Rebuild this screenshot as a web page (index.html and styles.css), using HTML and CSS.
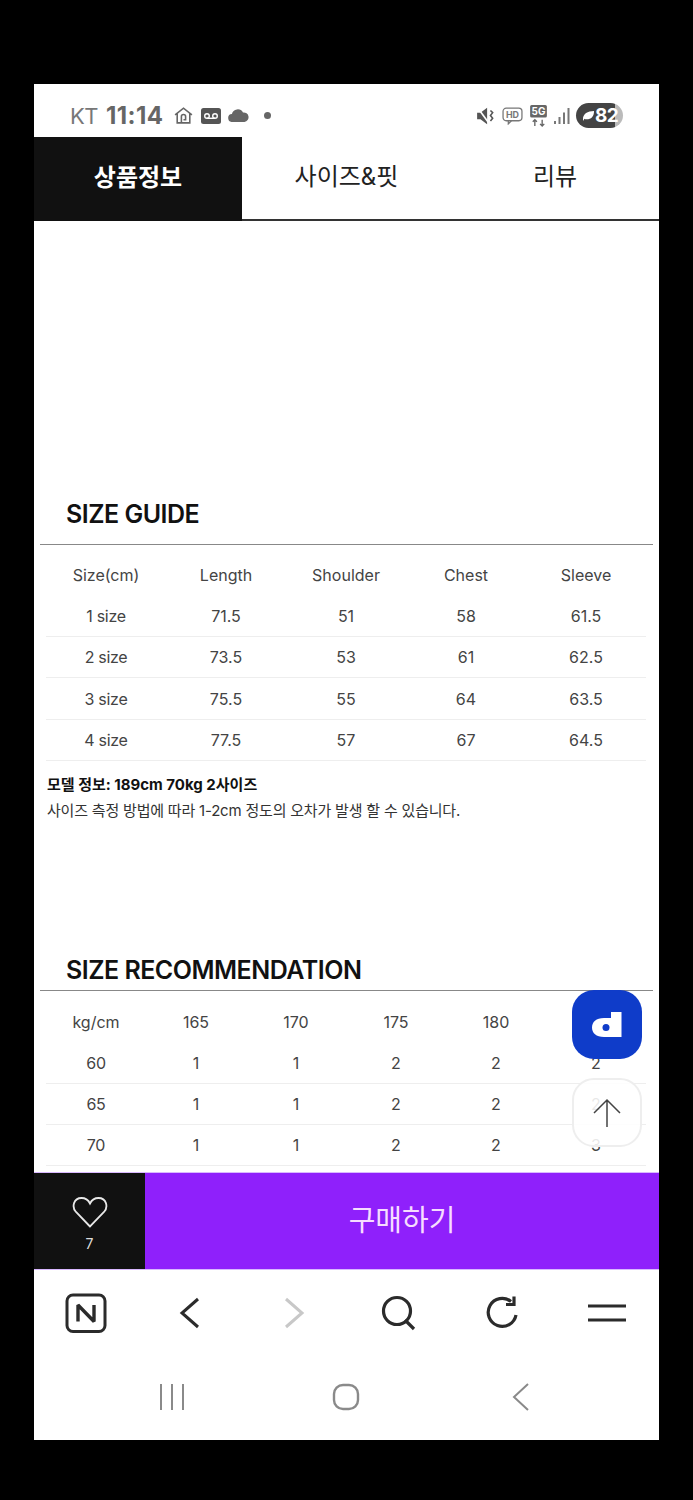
FILE: index.html
```html
<!DOCTYPE html>
<html lang="ko">
<head>
  <meta charset="UTF-8" />
  <meta name="viewport" content="width=device-width, initial-scale=1.0"/>
  <title>SIZE GUIDE</title>
  <link rel="stylesheet" href="styles.css">
</head>
<body>
  <div class="phone">
    <div class="status-bar">
      <div class="status-left">
        <span class="carrier">KT</span>
        <span class="clock">11:14</span>
        <svg class="st-home" width="21" height="21" viewBox="0 0 20 20" fill="none" stroke="#666" stroke-width="1.5"><path d="M2 9.500 10 3l8 6.500M4 8v9h12V8"/><path d="M8 17v-6a2 2 0 0 1 4 0v3h-2"/></svg>
        <svg class="st-tape" width="20" height="16" viewBox="0 0 20 16"><rect width="20" height="16" rx="2.500" fill="#555"/><circle cx="6" cy="8" r="2.300" fill="none" stroke="#fff" stroke-width="1.400"/><circle cx="14" cy="8" r="2.300" fill="none" stroke="#fff" stroke-width="1.400"/><path d="M6 10.300h8" stroke="#fff" stroke-width="1.400"/></svg>
        <svg class="st-cloud" width="21" height="13" viewBox="0 0 21 13"><path d="M4.500 13a4 4 0 0 1-.6-8A6 6 0 0 1 15 3.500 4.800 4.800 0 0 1 16.500 13z" fill="#666"/></svg>
        <span class="st-dot"></span>
      </div>
      <div class="status-right">
        <svg width="20" height="20" viewBox="0 0 18 18" fill="#555"><path d="M1 6h3l6-4.500v15L4 12H1z"/><path d="M1 1l11 15" stroke="#fff" stroke-width="1.500"/><path d="M13 4l2 2-2 2.500 2 2.500-2 2.500" fill="none" stroke="#555" stroke-width="1.400"/></svg>
        <svg width="21" height="19" viewBox="0 0 20 18" fill="none" stroke="#777" stroke-width="1.200"><rect x="1" y="2" width="18" height="12" rx="3"/><path d="M6 14v3l3-3"/><text x="10" y="11.500" font-family="Inter" font-size="8.500" font-weight="700" fill="#777" stroke="none" text-anchor="middle">HD</text></svg>
        <svg width="19" height="22" viewBox="0 0 18 21"><rect x="1" y="0" width="16" height="12" rx="1.500" fill="#666"/><text x="9" y="10" font-family="Inter" font-size="9.500" font-weight="700" fill="#fff" text-anchor="middle">5G</text><path d="M5.500 20v-6M3.500 16l2-2 2 2M12.500 14v6M10.500 18l2 2 2-2" fill="none" stroke="#666" stroke-width="1.300"/></svg>
        <svg class="st-signal" width="16" height="17" viewBox="0 0 16 17" fill="#777"><rect x="0" y="14" width="2" height="3"/><rect x="4.500" y="10" width="2" height="7"/><rect x="9" y="5.500" width="2" height="11.500"/><rect x="13.500" y="1" width="2" height="16"/></svg>
        <div class="battery">
          <svg width="13" height="12" viewBox="0 0 14 13"><path d="M1 10C1 4 6 1 13 1c0 6-3 9-8 9-1 0-2 0-2.500-.5L1.500 12z" fill="#fff"/></svg>
          <span>82</span>
        </div>
      </div>
    </div>

    <div class="tabs">
      <a class="tab active">상품정보</a>
      <a class="tab">사이즈&amp;핏</a>
      <a class="tab">리뷰</a>
    </div>

    <div class="content">
      <section class="size-guide">
        <h2 class="section-title">SIZE GUIDE</h2>
        <table class="size-table">
          <thead>
            <tr><th>Size(cm)</th><th>Length</th><th>Shoulder</th><th>Chest</th><th>Sleeve</th></tr>
          </thead>
          <tbody>
            <tr><td>1 size</td><td>71.5</td><td>51</td><td>58</td><td>61.5</td></tr>
            <tr><td>2 size</td><td>73.5</td><td>53</td><td>61</td><td>62.5</td></tr>
            <tr><td>3 size</td><td>75.5</td><td>55</td><td>64</td><td>63.5</td></tr>
            <tr><td>4 size</td><td>77.5</td><td>57</td><td>67</td><td>64.5</td></tr>
          </tbody>
        </table>
        <div class="notes">
          <p class="model-info">모델 정보: 189cm 70kg 2사이즈</p>
          <p>사이즈 측정 방법에 따라 1-2cm 정도의 오차가 발생 할 수 있습니다.</p>
        </div>
      </section>

      <section class="size-reco">
        <h2 class="section-title">SIZE RECOMMENDATION</h2>
        <table class="size-table">
          <thead>
            <tr><th>kg/cm</th><th>165</th><th>170</th><th>175</th><th>180</th><th>185</th></tr>
          </thead>
          <tbody>
            <tr><td>60</td><td>1</td><td>1</td><td>2</td><td>2</td><td>2</td></tr>
            <tr><td>65</td><td>1</td><td>1</td><td>2</td><td>2</td><td>2</td></tr>
            <tr><td>70</td><td>1</td><td>1</td><td>2</td><td>2</td><td>3</td></tr>
          </tbody>
        </table>
      </section>

      <div class="float-btn float-d">
        <svg width="32" height="26" viewBox="0 0 32 26"><path d="M20 0h10.500v25H13C5 25 1 21 1 15.500S5 6 13 6h7z" fill="#fff"/><circle cx="15" cy="15.500" r="3.500" fill="#0f3cc9"/></svg>
      </div>
      <div class="float-btn float-top">
        <svg width="30" height="30" viewBox="0 0 30 30" fill="none" stroke="#444" stroke-width="1.500"><path d="M15 2v27M2 15 15 2l13 13"/></svg>
      </div>
    </div>

    <div class="buy-bar">
      <div class="like">
        <svg width="36" height="32" viewBox="0 0 36 32" fill="none" stroke="#e8e8e8" stroke-width="1.800"><path d="M18 30.500 4 16C-.5 11 1.500 2 9.500 2 13.500 2 16.500 4.500 18 7.500 19.500 4.500 22.500 2 26.500 2 34.500 2 36.500 11 32 16z"/></svg>
        <span>7</span>
      </div>
      <button class="buy-btn">구매하기</button>
    </div>

    <div class="browser-nav">
      <div class="nav-item">
        <svg width="42" height="40" viewBox="0 0 42 40" fill="none" stroke="#2b2b2b"><rect x="2" y="2" width="38" height="36.500" rx="6" stroke-width="3"/><path d="M13 28.500V12l16 16.500V12" stroke-width="3.400" stroke-linejoin="bevel"/></svg>
      </div>
      <div class="nav-item">
        <svg width="22" height="32" viewBox="0 0 22 32" fill="none" stroke="#2b2b2b" stroke-width="3"><path d="M19 2 3 16l16 14"/></svg>
      </div>
      <div class="nav-item">
        <svg width="22" height="32" viewBox="0 0 22 32" fill="none" stroke="#c8c8c8" stroke-width="3"><path d="M3 2l16 14L3 30"/></svg>
      </div>
      <div class="nav-item">
        <svg width="36" height="36" viewBox="0 0 36 36" fill="none" stroke="#2b2b2b" stroke-width="3.200"><circle cx="16" cy="16" r="13.500"/><path d="M24 25l9 9"/></svg>
      </div>
      <div class="nav-item">
        <svg width="36" height="36" viewBox="0 0 36 36" fill="none" stroke="#2b2b2b" stroke-width="3.200"><path d="M31 20a14 14 0 1 1-5-13.500"/><path d="M29 1.500V9.500h-8"/></svg>
      </div>
      <div class="nav-item">
        <svg width="38" height="20" viewBox="0 0 38 20" fill="none" stroke="#2b2b2b" stroke-width="3"><path d="M0 3h38M0 17h38"/></svg>
      </div>
    </div>

    <div class="system-nav">
      <div class="nav-item">
        <svg width="26" height="26" viewBox="0 0 26 26" fill="none" stroke="#8a8a8a" stroke-width="2"><path d="M2 0v26M13 0v26M24 0v26"/></svg>
      </div>
      <div class="nav-item">
        <svg width="28" height="28" viewBox="0 0 28 28" fill="none" stroke="#8a8a8a" stroke-width="2.400"><rect x="2" y="2" width="24" height="24" rx="9"/></svg>
      </div>
      <div class="nav-item">
        <svg width="18" height="28" viewBox="0 0 18 28" fill="none" stroke="#8a8a8a" stroke-width="2"><path d="M16 1 2 14l14 13"/></svg>
      </div>
    </div>
  </div>
</body>
</html>
```

FILE: styles.css
```css
* {
  box-sizing: border-box;
}
body {
  margin: 0;
  background-color: #000;
  font-family: Inter, "Noto Sans CJK KR", sans-serif;
  color: #333;
}
.phone {
  width: 625px;
  height: 1356px;
  margin: 84px 0 0 34px;
  background: #fff;
  display: flex;
  flex-direction: column;
}

/* status bar */
.status-bar {
  flex: none;
  height: 53px;
  padding: 10px 36px 0 36px;
  display: flex;
  justify-content: space-between;
  align-items: center;
}
.status-left,
.status-right {
  display: flex;
  align-items: center;
}
.status-left {
  gap: 7px;
}
.status-right {
  gap: 6px;
}
.carrier {
  font-size: 22px;
  letter-spacing: -0.5px;
  color: #777;
  margin-right: 1px;
}
.clock {
  font-size: 24px;
  font-weight: 700;
  letter-spacing: 0.4px;
  color: #666;
  margin-right: 3px;
}
.st-dot {
  width: 7px;
  height: 7px;
  margin-left: 8px;
  border-radius: 50%;
  background: #666;
}
.battery {
  width: 47px;
  height: 25px;
  padding-left: 6px;
  border-radius: 13px;
  background: linear-gradient(90deg, #444 82%, #bbb 82%);
  display: flex;
  align-items: center;
  color: #fff;
  font-size: 19px;
  font-weight: 700;
  letter-spacing: -0.5px;
}

/* tabs */
.tabs {
  flex: none;
  height: 84px;
  display: grid;
  grid-template-columns: 208px 1fr 208px;
  border-bottom: 2px solid #333;
}
.tab {
  display: flex;
  align-items: center;
  justify-content: center;
  font-size: 24px;
  color: #222;
  padding-bottom: 7px;
}
.tab.active {
  background: #111;
  color: #fff;
  font-weight: 700;
  margin-bottom: -2px;
}

/* size tables */
.content {
  flex: 1;
  min-height: 0;
  position: relative;
  overflow: hidden;
  padding: 278px 6px 0;
}
.section-title {
  margin: 0;
  padding: 0 0 15px 26px;
  border-bottom: 1px solid #888;
  font-size: 25px;
  line-height: 30px;
  font-weight: 600;
  letter-spacing: -0.5px;
  color: #111;
}
.size-reco {
  margin-top: 131px;
}
.size-reco .section-title {
  padding-bottom: 5px;
}
.size-table {
  width: 600px;
  margin: 9px 0 0 6px;
  border-collapse: collapse;
  table-layout: fixed;
  font-size: 16px;
  color: #444;
}
.size-table th,
.size-table td {
  height: 41.3px;
  padding: 0;
  text-align: center;
  font-weight: 400;
}
.size-table td:first-child {
  letter-spacing: -0.3px;
}
.size-table tbody tr {
  border-bottom: 1px solid #eee;
}
.size-reco .size-table {
  margin-top: 11px;
}
.size-reco .size-table th,
.size-reco .size-table td {
  height: 41px;
}
.notes {
  margin: 11px 0 0 7px;
  font-size: 15px;
  line-height: 26px;
  letter-spacing: -0.2px;
  color: #333;
}
.notes p {
  margin: 0;
}
.model-info {
  font-weight: 700;
  letter-spacing: 0;
  color: #111;
}

/* floating buttons */
.float-btn {
  position: absolute;
  left: 538px;
  width: 70px;
  height: 69px;
  border-radius: 22px;
  display: flex;
  align-items: center;
  justify-content: center;
}
.float-d {
  top: 769px;
  background: #0f3cc9;
}
.float-top {
  top: 857px;
  background: rgba(255, 255, 255, 0.88);
  border: 2px solid #eee;
}

/* buy bar */
.buy-bar {
  flex: none;
  height: 98px;
  display: flex;
  border-top: 1px solid #d9b8ff;
  border-bottom: 1px solid #d9b8ff;
}
.like {
  width: 111px;
  background: #111;
  color: #ddd;
  font-size: 14px;
  display: flex;
  flex-direction: column;
  align-items: center;
  padding-top: 23px;
  gap: 7px;
}
.buy-btn {
  flex: 1;
  border: none;
  background: #8f20fb;
  color: #f6dcff;
  font-family: inherit;
  font-size: 29px;
  padding: 0 0 6px;
}

/* bottom navs */
.browser-nav {
  flex: none;
  height: 85px;
  display: grid;
  grid-template-columns: repeat(6, 1fr);
  padding-top: 1px;
}
.system-nav {
  flex: none;
  height: 85px;
  display: grid;
  grid-template-columns: repeat(3, 1fr);
  padding: 0 51px 1px;
}
.nav-item {
  display: flex;
  align-items: center;
  justify-content: center;
}
```
